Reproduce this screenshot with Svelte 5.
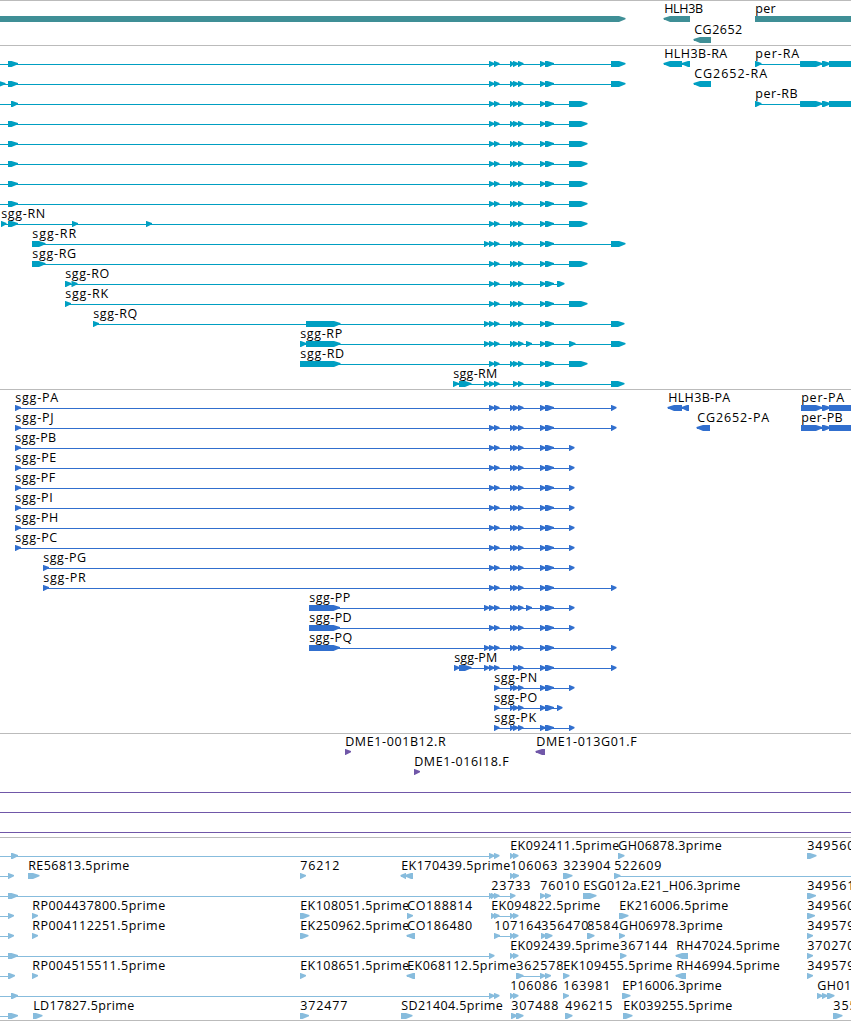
<script>
  // Splicing patterns shared by most transcripts: each exon is [start, end]
  const A = [[489, 494], [494, 499]];
  const A3 = [[484, 489], ...A];
  const B2 = [[513, 518], [518, 523]];
  const B = [[510, 513.5], ...B2];
  const C = [[540, 545], [545, 553.5]];
  const core = [...A, ...B, ...C];
  const core3 = [...A3, ...B, ...C];
  const long = [611, 625];
  const short = [569, 587];
  const stop = [611, 616];
  const stopShort = [569, 574];
  const perTail = [[801, 822], [822, 830], [829, 870]];

  // A feature: row position, label, exons, direction, optional line extent
  const f = (y, label, exons, dir = 1, ext = {}) => ({
    y, label, exons, dir,
    from: ext.from ?? exons[0][0],
    to: ext.to ?? exons[exons.length - 1][0] + 1
  });
  const open = { from: -5 };

  const tracks = [
    {
      name: 'genes', top: 0, height: 45, color: '#3f8f96',
      features: [
        f(19, '', [[-10, 625]]),
        f(19, 'HLH3B', [[664, 690]], -1),
        f(40, 'CG2652', [[694, 711]], -1),
        f(19, 'per', [[755, 870]])
      ]
    },
    {
      name: 'transcripts', top: 45, height: 344, color: '#009fc2',
      features: [
        f(64, '', [[8, 17.5], ...core, long], 1, open),
        f(84, '', [[-4, 5], [8, 17.5], ...core, long], 1, open),
        f(104, '', [[11, 17.5], ...core, short], 1, open),
        ...[124, 144, 164, 184, 204].map((y) => f(y, '', [[8, 17.5], ...core, short], 1, open)),
        f(224, 'sgg-RN', [[1, 6], [8, 17.5], [72, 77.5], [146, 151.5], ...core, short]),
        f(244, 'sgg-RR', [[32, 45], ...core3, long]),
        f(264, 'sgg-RG', [[32, 45], ...core, short]),
        f(284, 'sgg-RO', [[65, 71], [71.5, 77], ...core, [557, 564]]),
        f(304, 'sgg-RK', [[65, 70.5], ...core, short]),
        f(324, 'sgg-RQ', [[93, 98.5], [306, 340], ...core3, [611, 624]]),
        f(344, 'sgg-RP', [[300, 306], [306, 340], ...A3, ...B, [526, 531.5], ...C, [569, 575], long]),
        f(364, 'sgg-RD', [[300, 340], ...core, short]),
        f(384, 'sgg-RM', [[453, 458.5], [459, 471], ...A3, ...B2, ...C, [611, 624]]),
        f(64, 'HLH3B-RA', [[664, 682], [682, 690]], -1),
        f(84, 'CG2652-RA', [[694, 711]], -1),
        f(64, 'per-RA', [[755, 761], [800, 803], ...perTail]),
        f(104, 'per-RB', [[755, 761], [800, 803], ...perTail])
      ]
    },
    {
      name: 'proteins', top: 389, height: 344, color: '#316fce',
      features: [
        f(408, 'sgg-PA', [[15, 20.5], ...core, stop]),
        f(428, 'sgg-PJ', [[15, 20.5], ...core, stop]),
        ...['PB', 'PE', 'PF', 'PI', 'PH', 'PC'].map((n, i) =>
          f(448 + i * 20, 'sgg-' + n, [[15, 20.5], ...core, stopShort])
        ),
        f(568, 'sgg-PG', [[43, 48.5], ...core, stopShort]),
        f(588, 'sgg-PR', [[43, 48.5], ...core, stop]),
        f(608, 'sgg-PP', [[309, 339.5], ...A3, ...B, [526, 531.5], ...C, stopShort]),
        f(628, 'sgg-PD', [[309, 339.5], ...core, stopShort]),
        f(648, 'sgg-PQ', [[309, 339.5], ...core3, stop]),
        f(668, 'sgg-PM', [[454, 459], [459, 471], ...A3, ...B2, ...C, stop]),
        f(688, 'sgg-PN', [[494, 499], ...B, ...C, stopShort]),
        f(708, 'sgg-PO', [[494, 499], ...B, ...C, [557, 562]]),
        f(728, 'sgg-PK', [[494, 499], ...B, ...C, stopShort]),
        f(408, 'HLH3B-PA', [[668, 682], [682, 689]], -1),
        f(428, 'CG2652-PA', [[697, 710]], -1),
        f(408, 'per-PA', perTail),
        f(428, 'per-PB', perTail)
      ]
    },
    {
      name: 'clones', top: 733, height: 104, color: '#7057a8',
      features: [
        f(752, 'DME1-001B12.R', [[345, 350.5]]),
        f(772, 'DME1-016I18.F', [[414, 419.5]]),
        f(752, 'DME1-013G01.F', [[536, 545]], -1),
        ...[792, 812, 832].map((y) => f(y, '', [], 1, { from: 0, to: 851 }))
      ]
    },
    {
      name: 'ests', top: 837, height: 183, color: '#87bcdd',
      features: [
        f(856, '', [[11, 17.5], ...A], 1, open),
        f(856, 'EK092411.5prime', [[510, 513.5], [513, 518]]),
        f(856, 'GH06878.3prime', [[618, 624]]),
        f(856, '349560', [[807, 816]]),

        f(876, '', [[8, 13.5]], 1, open),
        f(876, 'RE56813.5prime', [[28, 39]]),
        f(876, '76212', [[300, 305.5]]),
        f(876, 'EK170439.5prime', [[401, 406], [405, 413]], -1),
        f(876, '106063', [[510, 514], [513, 518.5]]),
        f(876, '323904', [[563, 572]]),
        f(876, '522609', [[614, 620]], 1, { to: 851 }),

        f(896, '', [[8, 17.5], [489, 493]], 1, open),
        f(896, '23733', [[491, 495], [494, 499], [510, 515]]),
        f(896, '76010', [[540, 545], [545, 550.5]]),
        f(896, 'ESG012a.E21_H06.3prime', [[583, 596]]),
        f(896, '349561', [[807, 815.5]]),

        f(916, '', [[8, 13.5]], 1, open),
        f(916, 'RP004437800.5prime', [[32, 37.5]]),
        f(916, 'EK108051.5prime', [[300, 309]]),
        f(916, 'CO188814', [[407, 412.5]]),
        f(916, 'EK094822.5prime', [[491, 495], [494, 499], [510, 513.5], [513, 518]]),
        f(916, 'EK216006.5prime', [[619, 628]]),
        f(916, '349560', [[807, 814.5]]),

        f(936, '', [[8, 13.5]], 1, open),
        f(936, 'RP004112251.5prime', [[32, 37.5]]),
        f(936, 'EK250962.5prime', [[300, 308]]),
        f(936, 'CO186480', [[407, 415]], -1),
        f(936, '107164', [[494, 499.5], [510, 514], [513, 518]]),
        f(936, '356470', [[541, 546], [545, 552]]),
        f(936, '8584', [[587, 594]]),
        f(936, 'GH06978.3prime', [[619, 624.5]]),
        f(936, '349579', [[807, 812.5]]),

        f(956, '', [[8, 17.5], [489, 494]], 1, open),
        f(956, 'EK092439.5prime', [[510, 513.5], [513, 518]]),
        f(956, '367144', [[620, 626]]),
        f(956, 'RH47024.5prime', [[676, 688]], -1),
        f(956, '370270', [[807, 812.5]]),

        f(976, '', [[8, 14.5]], 1, open),
        f(976, 'RP004515511.5prime', [[32, 37.5]]),
        f(976, 'EK108651.5prime', [[300, 305.5]]),
        f(976, 'EK068112.5prime', [[407, 415]], -1),
        f(976, '362578', [[516, 523], [540, 545], [545, 550.5]]),
        f(976, 'EK109455.5prime', [[563, 569]]),
        f(976, 'RH46994.5prime', [[676, 686]], -1),
        f(976, '349579', [[807, 812.5]]),

        f(996, '', [[11, 17.5], ...A], 1, open),
        f(996, '106086', [[510, 513.5], [513, 518]]),
        f(996, '163981', [[563, 568.5]]),
        f(996, 'EP16006.3prime', [[622, 630]]),
        f(996, 'GH01', [[817, 822], [822, 827], [827, 834]]),

        f(1016, '', [[8, 17.5]], 1, open),
        f(1016, 'LD17827.5prime', [[33, 42]]),
        f(1016, '372477', [[300, 308.5]]),
        f(1016, 'SD21404.5prime', [[401, 412]]),
        f(1016, '307488', [[511, 517], [516, 523]]),
        f(1016, '496215', [[565, 572]]),
        f(1016, 'EK039255.5prime', [[623, 632]]),
        f(1016, '355', [[833, 842]])
      ]
    }
  ];

  // Label widths in pixels
  const widths = {
    HLH3B: 39, CG2652: 48, per: 20.5,
    'HLH3B-RA': 63, 'CG2652-RA': 73, 'per-RA': 44, 'per-RB': 42.5,
    'HLH3B-PA': 62, 'CG2652-PA': 72, 'per-PA': 43, 'per-PB': 41.5,
    'sgg-RP': 42, 'sgg-RK': 43, 'sgg-PA': 43, 'sgg-PJ': 38.5, 'sgg-PB': 41,
    'sgg-PE': 41, 'sgg-PF': 40, 'sgg-PI': 37.5, 'sgg-PH': 43, 'sgg-PC': 42,
    'sgg-PG': 43, 'sgg-PR': 42.5, 'sgg-PP': 41, 'sgg-PD': 42.5, 'sgg-PQ': 43,
    'sgg-PM': 43, 'sgg-PN': 43, 'sgg-PO': 43, 'sgg-PK': 42,
    'DME1-001B12.R': 100.5, 'DME1-016I18.F': 94.5, 'DME1-013G01.F': 100.5,
    'RE56813.5prime': 101, 'LD17827.5prime': 101, 'SD21404.5prime': 101.5,
    'ESG012a.E21_H06.3prime': 157, 'EP16006.3prime': 99.5, GH01: 34
  };

  function labelWidth(s) {
    if (widths[s]) return widths[s];
    if (s.startsWith('sgg')) return 44;
    if (/^\d+$/.test(s)) return s.length * 7.85;
    if (s.startsWith('RP')) return 133;
    if (s.startsWith('EK')) return 109;
    if (s.startsWith('CO')) return 65;
    return 103.5;
  }

  // Box whose leading end tapers to a point in the reading direction
  function exonPoints([a, b], y, dir) {
    const head = Math.min(b - a - 0.5, b - a > 7 ? 6 : 5);
    const t = y - 3, l = y + 3, m1 = y - 1, m2 = y + 0.2;
    return dir > 0
      ? `${a},${t} ${b - head},${t} ${b + 0.5},${m1} ${b + 0.5},${m2} ${b - head},${l} ${a},${l}`
      : `${b},${t} ${a + head},${t} ${a - 0.5},${m1} ${a - 0.5},${m2} ${a + head},${l} ${b},${l}`;
  }
</script>

<main class="browser">
  {#each tracks as track (track.name)}
    <section class="track">
      <svg
        width="851"
        height={track.height - 1}
        viewBox="0 {track.top + 1} 851 {track.height - 1}"
        fill={track.color}
      >
        {#each track.features as item}
          {#if item.to > item.from}
            <rect x={item.from} y={item.y} width={item.to - item.from} height="1" />
          {/if}
          {#each item.exons as exon}
            <polygon points={exonPoints(exon, item.y, item.dir)} />
          {/each}
          {#if item.label}
            <text x={item.from + 0.2} y={item.y - 6} textLength={labelWidth(item.label)}>{item.label}</text>
          {/if}
        {/each}
      </svg>
    </section>
  {/each}
</main>

<style>
  :global(body) {
    margin: 0;
    background: #fff;
  }
  .browser {
    display: flex;
    flex-direction: column;
    width: 851px;
    height: 1021px;
    box-sizing: border-box;
    overflow: hidden;
    border-bottom: 1px solid #bbb;
    background: #fff;
  }
  .track {
    flex: none;
    border-top: 1px solid #bbb;
  }
  svg {
    display: block;
    overflow: hidden;
  }
  text {
    fill: #000;
    font-family: 'Open Sans', 'Noto Sans', sans-serif;
    font-size: 12.5px;
  }
</style>
